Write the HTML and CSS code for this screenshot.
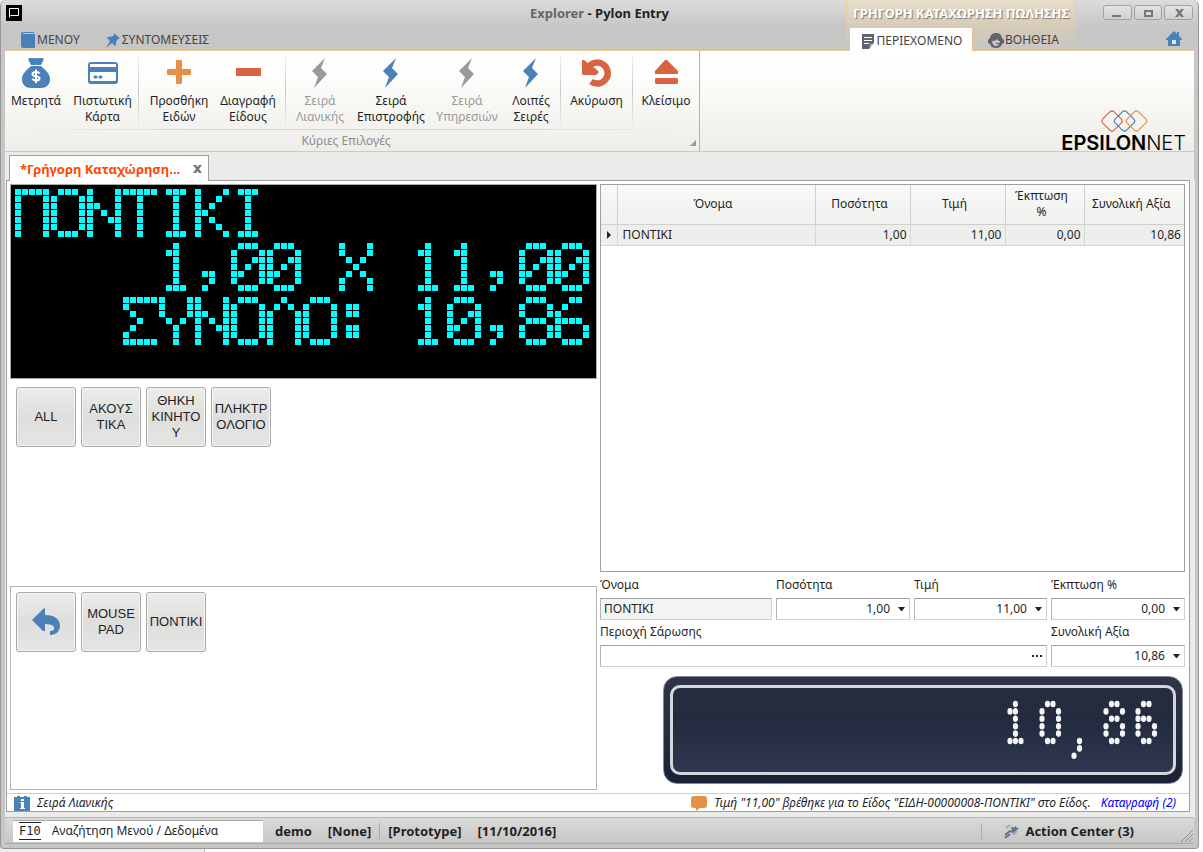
FILE: index.html
```html
<!DOCTYPE html>
<html lang="el">
<head>
<meta charset="utf-8">
<meta name="viewport" content="width=device-width, initial-scale=1">
<title>Explorer - Pylon Entry</title>
<link rel="stylesheet" href="styles.css">
<script src="displays.js" defer></script>
</head>
<body>
<svg class="sprite" aria-hidden="true">
  <symbol id="bolt" viewBox="0 0 18 30"><path d="M14 0 1 13l6 6-4 11 13-14-6-6z"/></symbol>
  <symbol id="caret" viewBox="0 0 7 4"><path d="M0 0h7L4 4H3z"/></symbol>
</svg>
<div class="window">
  <header class="titlebar">
    <svg class="app-icon" viewBox="0 0 16 16"><path d="M0 0h16v16H0z"/><path d="M3.500 12.500v-9h9v7h-8" fill="none" stroke="#fff"/></svg>
    <h1 class="title"><span class="title-app">Explorer</span> - Pylon Entry</h1>
    <div class="context-title">ΓΡΗΓΟΡΗ ΚΑΤΑΧΩΡΗΣΗ ΠΩΛΗΣΗΣ</div>
    <div class="window-buttons">
      <button aria-label="Minimize"><svg viewBox="0 0 12 10"><path d="M1 7h9v2H1z"/></svg></button>
      <button aria-label="Maximize"><svg viewBox="0 0 12 10"><path d="M2 2h9v7H2zM4 4v3h5V4z" fill-rule="evenodd"/></svg></button>
      <button aria-label="Close"><svg viewBox="0 0 12 10"><path d="M2 1h3l1.500 2L8 1h3L8 5l3 4H8L6.500 7 5 9H2l3-4z"/></svg></button>
    </div>
  </header>

  <nav class="tabs">
    <button class="tab tab-menu"><svg viewBox="0 0 16 16"><path fill="#4a81b9" d="M3 0h11v1H3v1h12v13a1 1 0 0 1-1 1H3a2 2 0 0 1-2-2V2a2 2 0 0 1 2-2z"/></svg>ΜΕΝΟΥ</button>
    <button class="tab tab-shortcuts"><svg viewBox="0 0 16 16"><path fill="#4a81b9" d="m9 1 6 5.500-2 .5-2 3v3l-1 1-3-3-6 5 4-7-3-3 1-1 4-.5L9 3z"/></svg>ΣΥΝΤΟΜΕΥΣΕΙΣ</button>
    <div class="context-tabs">
      <button class="tab tab-active"><svg viewBox="0 0 16 16"><path fill="#5e656e" d="M2 1h12v9l-5 6H2z"/><path stroke="#fff" fill="none" d="M4 4.500h8M4 7.500h8M4 10.500h5"/><path fill="#fff" d="m9.500 15 .5-4 4-.5z" opacity=".5"/></svg>ΠΕΡΙΕΧΟΜΕΝΟ</button>
      <button class="tab tab-help"><svg viewBox="0 0 16 16"><path fill="#5e656e" d="M8 1a6 6 0 0 1 6 5l2 2v3l-2 1c-1 3-3 4-6 4s-5-1-6-4l-2-1V8l2-2a6 6 0 0 1 6-5z"/><path d="M4 9c3 0 4-1 5-2 1 1 1 2 3 2 0 3-2 5-4 5s-4-2-4-5z" fill="#c8c2ba"/><path d="M8 11.500h5" stroke="#5e656e"/></svg>ΒΟΗΘΕΙΑ</button>
    </div>
    <button class="home" aria-label="Home"><svg viewBox="0 0 16 16"><path fill="#4a81b9" d="M8 0l3 3V1h2v4l3 3v1h-2v6H2V9H0V8z"/><path fill="#e3e5e8" d="M6 9h4v4H6z"/></svg></button>
  </nav>

  <section class="ribbon">
    <div class="ribbon-group">
      <div class="ribbon-items">
        <div class="set set-pay">
          <button class="cmd"><svg viewBox="0 0 30 30"><path fill="#4a81b9" d="M7 1c3-2 5 0 8-1 3 1 5-1 8 1l-3 6H10zM10 8h10c3 3 9 7 9 13 0 6-4 9-9 9H10c-5 0-9-3-9-9C1 15 7 11 10 8z"/><path fill="none" stroke="#fff" stroke-width="2" d="M18.500 15.500c-1-2-7-2-7 .7 0 3 7 1.300 7 4.300 0 2.700-6 2.500-7 .2M15 11.500v13.500"/></svg><span>Μετρητά</span></button>
          <button class="cmd"><svg viewBox="0 0 30 30"><path fill="#4a81b9" fill-rule="evenodd" d="M3 4h24a3 3 0 0 1 3 3v16a3 3 0 0 1-3 3H3a3 3 0 0 1-3-3V7a3 3 0 0 1 3-3zm0 2a1 1 0 0 0-1 1v2h26V7a1 1 0 0 0-1-1zM2 14v8a1 1 0 0 0 1 1h24a1 1 0 0 0 1-1v-8z"/><path stroke="#4a81b9" stroke-width="3" stroke-linecap="round" d="M7 19h1M12 19h1"/></svg><span>Πιστωτική<br>Κάρτα</span></button>
        </div>
        <div class="set set-lines">
          <button class="cmd"><svg viewBox="0 0 30 30"><path fill="#e69148" d="M13 2h4a1 1 0 0 1 1 1v8h8a1 1 0 0 1 1 1v4a1 1 0 0 1-1 1h-8v8a1 1 0 0 1-1 1h-4a1 1 0 0 1-1-1v-8H4a1 1 0 0 1-1-1v-4a1 1 0 0 1 1-1h8V3a1 1 0 0 1 1-1z"/></svg><span>Προσθήκη<br>Ειδών</span></button>
          <button class="cmd"><svg viewBox="0 0 30 30"><rect fill="#d96243" x="3" y="10" width="25" height="8" rx="1"/></svg><span>Διαγραφή<br>Είδους</span></button>
        </div>
        <div class="set set-series">
          <button class="cmd" disabled><svg class="bolt-gray"><use href="#bolt"/></svg><span>Σειρά<br>Λιανικής</span></button>
          <button class="cmd"><svg class="bolt-blue"><use href="#bolt"/></svg><span>Σειρά<br>Επιστροφής</span></button>
          <button class="cmd" disabled><svg class="bolt-gray"><use href="#bolt"/></svg><span>Σειρά<br>Υπηρεσιών</span></button>
          <button class="cmd"><svg class="bolt-blue"><use href="#bolt"/></svg><span>Λοιπές<br>Σειρές</span></button>
        </div>
        <div class="set set-undo">
          <button class="cmd"><svg viewBox="0 0 30 30"><path fill="none" stroke="#d96243" stroke-width="6.500" d="M7 8.500A10.500 10.500 0 1 1 9 23.500"/><path fill="#d96243" d="M0 2h2l5 4 7 5 3 3-3 3H1l-1-1z"/></svg><span>Ακύρωση</span></button>
        </div>
        <div class="set set-close">
          <button class="cmd"><svg viewBox="0 0 30 30"><path fill="#d96243" d="M14 2h2l11 11v3H4v-3zM5 20h21l1 1v4l-1 1H5l-1-1v-4z"/></svg><span>Κλείσιμο</span></button>
        </div>
      </div>
      <div class="ribbon-caption">Κύριες Επιλογές<svg viewBox="0 0 6 6"><path d="M6 0v6H0z"/></svg></div>
    </div>
    <div class="brand">
      <svg viewBox="0 0 48 24" fill="none" stroke-width="1.200">
        <rect x="4" y="4" width="16" height="16" rx="3" transform="rotate(45 12 12)" stroke="#d96243"/>
        <rect x="16.500" y="4" width="16" height="16" rx="3" transform="rotate(45 24.500 12)" stroke="#4a81b9"/>
        <rect x="28.500" y="4" width="16" height="16" rx="3" transform="rotate(45 36.500 12)" stroke="#e69148"/>
      </svg>
      <div class="brand-name">EPSILON<span>NET</span></div>
    </div>
  </section>

  <div class="doc-strip">
    <div class="doc-tab"><span>*Γρήγορη Καταχώρηση...</span><button aria-label="Close tab"><svg viewBox="0 0 9 8"><path d="M0 0h3l1.500 2L6 0h3L6 4l3 4H6L4.500 6 3 8H0l3-4z"/></svg></button></div>
  </div>

  <main class="doc">
    <div class="work">
      <section class="left">
        <div class="vfd">
          <p class="vfd-line lamps" data-face="square">ΠΟΝΤΙΚΙ</p>
          <p class="vfd-line vfd-right lamps" data-face="square">1,00 X 11,00</p>
          <p class="vfd-line vfd-right lamps" data-face="square">ΣΥΝΟΛΟ: 10,86</p>
        </div>
        <div class="tiles tiles-groups">
          <button class="tile">ALL</button>
          <button class="tile">ΑΚΟΥΣ<br>ΤΙΚΑ</button>
          <button class="tile">ΘΗΚΗ<br>ΚΙΝΗΤΟ<br>Υ</button>
          <button class="tile">ΠΛΗΚΤΡ<br>ΟΛΟΓΙΟ</button>
        </div>
        <div class="tiles tiles-items">
          <button class="tile" aria-label="Back"><svg viewBox="0 0 28 28"><path fill="#4a81b9" d="M0 12 11 1l2-1v7c8 0 15 3 15 11 0 5-4 9-10 9v-4c3 0 5-1 4-4-1-2-4-3-9-3v7h-2z"/></svg></button>
          <button class="tile">MOUSE<br>PAD</button>
          <button class="tile">ΠΟΝΤΙΚΙ</button>
        </div>
      </section>

      <section class="right">
        <div class="grid-box">
          <table class="grid">
            <colgroup><col class="c-mark"><col class="c-name"><col class="c-num"><col class="c-num"><col class="c-disc"><col class="c-total"></colgroup>
            <thead><tr><th></th><th>Όνομα</th><th>Ποσότητα</th><th>Τιμή</th><th>Έκπτωση<br>%</th><th>Συνολική Αξία</th></tr></thead>
            <tbody><tr><td><svg class="marker" viewBox="0 0 4 8"><path d="M0 0l4 4-4 4z"/></svg></td><td>ΠΟΝΤΙΚΙ</td><td>1,00</td><td>11,00</td><td>0,00</td><td>10,86</td></tr></tbody>
          </table>
        </div>
        <form class="fields">
          <div class="field"><label for="name">Όνομα</label><div class="box box-readonly"><input id="name" value="ΠΟΝΤΙΚΙ" readonly></div></div>
          <div class="field"><label for="qty">Ποσότητα</label><div class="box"><input id="qty" class="num" value="1,00"><button type="button" aria-label="Ποσότητα"><svg><use href="#caret"/></svg></button></div></div>
          <div class="field"><label for="price">Τιμή</label><div class="box"><input id="price" class="num" value="11,00"><button type="button" aria-label="Τιμή"><svg><use href="#caret"/></svg></button></div></div>
          <div class="field"><label for="disc">Έκπτωση %</label><div class="box"><input id="disc" class="num" value="0,00"><button type="button" aria-label="Έκπτωση"><svg><use href="#caret"/></svg></button></div></div>
          <div class="field field-scan"><label for="scan">Περιοχή Σάρωσης</label><div class="box"><input id="scan"><button type="button" class="more" aria-label="Σάρωση"><svg viewBox="0 0 10 2"><path d="M0 0h2v2H0zM4 0h2v2H4zM8 0h2v2H8z"/></svg></button></div></div>
          <div class="field"><label for="total">Συνολική Αξία</label><div class="box"><input id="total" class="num" value="10,86"><button type="button" aria-label="Συνολική Αξία"><svg><use href="#caret"/></svg></button></div></div>
        </form>
        <div class="led"><output class="led-screen lamps" data-face="round">10,86</output></div>
      </section>
    </div>
    <footer class="doc-status">
      <svg viewBox="0 0 16 16"><path fill="#4a81b9" d="M0 2h3V1h3v1h4V1h3v1h3v14H0z"/><path fill="#fff" d="M7 4h3v2H7zM6 7h4v6h1v1H6v-1h1V8H6z"/></svg>
      <em>Σειρά Λιανικής</em>
      <span class="message"><svg viewBox="0 0 16 16"><path fill="#e69148" d="M3 1h10a3 3 0 0 1 3 3v6a3 3 0 0 1-3 3H9l-4 3v-3H3a3 3 0 0 1-3-3V4a3 3 0 0 1 3-3z"/></svg><em>Τιμή "11,00" βρέθηκε για το Είδος "ΕΙΔΗ-00000008-ΠΟΝΤΙΚΙ" στο Είδος.</em></span>
      <a href="#log">Καταγραφή (2)</a>
    </footer>
  </main>

  <footer class="statusbar">
    <label class="search"><kbd>F10</kbd><input aria-label="Αναζήτηση" value="Αναζήτηση Μενού / Δεδομένα"></label>
    <span class="info">demo</span>
    <span class="info info-ruled">[None]</span>
    <span class="info">[Prototype]</span>
    <span class="info">[11/10/2016]</span>
    <button class="action-center"><svg viewBox="0 0 16 16"><g fill="none" stroke="#5b7390" stroke-width="2"><path d="m1 12 5-4 3 1 5-4"/><path d="m1 15 5-4 M8 4l1 3 3-3"/></g><path d="m2 5 4-3M9 12l4-4" stroke="#a3a9b0" stroke-width="2"/></svg>Action Center (3)</button>
    <svg class="grip" viewBox="0 0 12 12"><path d="M0 12 12 0M4 12l8-8M8 12l4-4" stroke="#8f8f8f"/></svg>
  </footer>
</div>
</body>
</html>
```

FILE: styles.css
```css
* { box-sizing: border-box; }
body {
  margin: 0;
  height: 100vh;
  display: flex;
  padding: 0 4px 3px 0;
  background: linear-gradient(90deg, #efefef 204px, #bbb 204px, #bbb 205px, #fdfdfd 205px);
  font: 12px/16px "Noto Sans", "DejaVu Sans", sans-serif;
  color: #1f1f1f;
}
button { font: inherit; color: inherit; border: 0; padding: 0; background: none; }
input { font: inherit; color: inherit; border: 0; padding: 0; background: none; min-width: 0; }
svg { display: block; flex: none; }
.sprite { position: absolute; width: 0; height: 0; }

.window {
  flex: 1;
  min-width: 0;
  display: flex;
  flex-direction: column;
  padding: 0 4px 4px;
  border: 1px solid #969696;
  border-top: 0;
  border-radius: 6px 6px 4px 4px;
  background: linear-gradient(#dcdcda, #c6c6c5 27px);
}

/* title bar */
.titlebar { display: flex; height: 27px; position: relative; }
.app-icon { width: 16px; height: 16px; margin: 5px 0 0 1px; }
.title { position: absolute; inset: 5px 0 auto; margin: 0; text-align: center; font-size: 13px; line-height: 16px; }
.title-app { color: #666; }
.context-title {
  width: 230px;
  margin-left: auto;
  padding-top: 5px;
  text-align: center;
  white-space: nowrap;
  font-size: 13px;
  font-weight: bold;
  color: #fff;
  text-shadow: 1px 1px 1px #777;
  border: 1px solid #e9cba0;
  border-width: 0 1px;
  background: linear-gradient(#e8dccb, #d6cab9);
}
.window-buttons { display: flex; gap: 2px; width: 118px; padding: 5px 1px 0 27px; }
.window-buttons button {
  flex: 1;
  height: 15px;
  display: flex;
  justify-content: center;
  align-items: center;
  border: 1px solid #a2a2a2;
  border-radius: 3px;
  background: linear-gradient(#e4e4e4, #cfcfcf);
}
.window-buttons svg { width: 12px; height: 10px; fill: #777; }

/* tab row */
.tabs { display: flex; height: 23px; color: #444; }
.tab { display: flex; align-items: center; gap: 1px; padding-top: 2px; white-space: nowrap; }
.tab svg { width: 16px; height: 16px; }
.tab-menu { margin-left: 15px; }
.tab-shortcuts { margin-left: 25px; }
.context-tabs { display: flex; width: 230px; margin-left: auto; padding-left: 4px; background: linear-gradient(#d6cab9, #c8c6c3); }
.tab-active { width: 123px; justify-content: center; margin-bottom: -1px; background: #fff; border: 1px solid #ecc58c; border-width: 1px 1px 0 0; position: relative; }
.tab-help { margin-left: 15px; }
.home { width: 118px; padding-left: 90px; }
.home svg { width: 16px; height: 16px; }

/* ribbon */
.ribbon {
  display: flex;
  justify-content: space-between;
  height: 102px;
  border: 1px solid #ecc58c;
  border-width: 1px 0;
  background: linear-gradient(#fff, #fcfcfa 30%, #eeede9);
}
.ribbon-group { display: flex; flex-direction: column; border-right: 1px solid #b3b3b0; }
.ribbon-items { display: flex; flex: 1; }
.set { display: grid; align-items: start; border-right: 1px solid; border-image: linear-gradient(#fff0, #c4c4c2 50%, #fff0) 1; }
.set-pay { grid-template-columns: 62px 71px; }
.set-lines { grid-template-columns: 70px 68px; padding: 0 3px 0 5px; }
.set-series { grid-template-columns: 60px 82px 70px 58px; padding-left: 4px; }
.set-undo { grid-template-columns: 71px; }
.set-close { grid-template-columns: 66px; border: 0; }
.cmd { display: flex; flex-direction: column; align-items: center; gap: 5px; padding-top: 7px; white-space: nowrap; }
.cmd svg { width: 30px; height: 30px; }
.cmd .bolt-gray { width: 18px; fill: #999; }
.cmd .bolt-blue { width: 18px; fill: #4a81b9; }
.cmd:disabled { color: #9a9a9a; }
.ribbon-caption {
  display: flex;
  justify-content: center;
  height: 22px;
  padding: 3px 12px 0 0;
  color: #8d8d8d;
  position: relative;
  border-top: 1px solid;
  border-image: linear-gradient(90deg, #fff0, #d4d4d2 30%, #d4d4d2 70%, #fff0) 1;
}
.ribbon-caption svg { position: absolute; right: 3px; bottom: 5px; width: 6px; height: 6px; fill: #999; }
.brand { align-self: flex-end; margin-right: 8px; }
.brand svg { width: 48px; height: 24px; margin: 0 auto 2px; }
.brand-name { font: 600 20px/16px Inter, sans-serif; color: #000; }
.brand-name span { font-weight: 300; }

/* document tabs */
.doc-strip { display: flex; height: 28px; padding: 3px 0 0 4px; background: #ebebe9; }
.doc-tab {
  width: 200px;
  height: 26px;
  display: flex;
  align-items: center;
  justify-content: space-between;
  padding: 0 6px 0 10px;
  border: 1px solid #9f9f9f;
  border-bottom: 0;
  background: #fff;
  color: #ff4800;
  font-size: 13px;
  font-weight: bold;
  white-space: nowrap;
  position: relative;
  z-index: 1;
}
.doc-tab svg { width: 9px; height: 8px; fill: #777; }

.doc {
  flex: 1;
  min-height: 0;
  display: flex;
  flex-direction: column;
  border: 1px solid #9f9f9f;
  box-shadow: 0 0 0 6px #ebebe9;
  clip-path: inset(0 -5px -6px -1px);
  margin: 0 4px 5px 1px;
  background: #fff;
}
.work { flex: 1; min-height: 0; display: flex; gap: 3px; padding: 3px 4px 0 3px; }
.left { flex: 587; min-width: 0; display: flex; flex-direction: column; }
.right { flex: 585; min-width: 0; display: flex; flex-direction: column; }

/* customer display */
.vfd { display: flex; flex-direction: column; gap: 5px; min-height: 195px; padding: 4px 5px 0 4px; background: #000; border: 1px solid #aaa; }
.vfd-line { margin: 0; display: flex; white-space: pre; }
.vfd-right { justify-content: flex-end; }
.lamp-char { display: grid; justify-items: center; color: transparent; }
.lamp-char > * { grid-area: 1 / 1; }
.vfd .lamp-char { width: 36px; height: 49px; font: 36px/49px "Liberation Mono", monospace; }
.vfd svg { width: 36px; height: 49px; fill: #0ff; }

/* product tiles */
.tiles { display: flex; flex-wrap: wrap; align-content: flex-start; gap: 5px; padding: 5px; }
.tiles-groups { flex: 1; padding: 8px 6px; }
.tiles-items { height: 204px; margin-bottom: 3px; border: 1px solid #b5b5b5; }
.tile {
  width: 60px;
  height: 60px;
  display: flex;
  justify-content: center;
  align-items: center;
  font: 13px/16px "Liberation Sans", Arial, sans-serif;
  border: 1px solid #a9a9a9;
  border-radius: 3px;
  background: linear-gradient(#ececeb, #dededd 50%, #e5e5e4);
  box-shadow: inset 0 0 0 1px #f4f4f3;
}
.tile svg { width: 28px; height: 28px; }

/* item grid */
.grid-box { flex: 1; min-height: 0; border: 1px solid #9f9f9f; }
.grid { width: 100%; table-layout: fixed; border-collapse: collapse; }
.c-mark { width: 16px; }
.c-num { width: 95px; }
.c-disc { width: 79px; }
.c-total { width: 100px; }
.grid th { height: 39px; padding: 0 6px 0 0; font-weight: normal; background: linear-gradient(#f8f8f7, #f0f0ee); border: 1px solid #cfcfcd; border-width: 0 1px 1px 0; }
.grid td { height: 21px; padding: 0 3px; text-align: right; background: #eeeeed; border: 1px solid #d6d6d4; border-width: 0 1px 1px 0; }
.grid td:nth-child(2) { text-align: left; padding-left: 5px; }
.grid th:last-child, .grid td:last-child { border-right: 0; }
.marker { width: 4px; height: 8px; fill: #223; margin: 0 auto; }

/* entry fields */
.fields { display: grid; grid-template-columns: 172fr 134fr 133fr 134fr; gap: 4px; padding-top: 5px; }
.field { min-width: 0; }
.field-scan { grid-column: span 3; }
.field label { display: block; height: 21px; }
.box { display: flex; height: 22px; border: 1px solid #9f9f9f; border-color: #9f9f9f #d0d0ce #d0d0ce #b5b5b5; background: #fff; }
.box-readonly { background: #f3f3f2; }
.box input { flex: 1; padding: 0 3px; }
.box .num { text-align: right; padding-right: 4px; }
.box button { width: 15px; padding-left: 4px; }
.box svg { width: 7px; height: 4px; fill: #222; }
.box .more { padding: 0 3px 0 1px; }
.box .more svg { width: 10px; height: 2px; }

/* total display */
.led {
  width: 520px;
  max-width: 100%;
  height: 108px;
  align-self: flex-end;
  margin: 9px 2px 9px 0;
  padding: 8px 6px;
  border: 1px solid #8a8794;
  border-radius: 14px;
  background: linear-gradient(#2e3549, #272e42 50%, #1a2035);
}
.led-screen {
  display: flex;
  justify-content: flex-end;
  height: 90px;
  padding: 12px 6px 0 0;
  border: 3px solid #d6d6da;
  border-radius: 10px;
  background: radial-gradient(ellipse 900px 26px at 50% 0, #262c40 98%, #262c4000 100%), linear-gradient(#1d2336, #2f384f);
}
.led .lamp-char { width: 32px; height: 60px; font: 32px/60px "Liberation Mono", monospace; }
.led svg { width: 32px; height: 60px; fill: #f6f6f6; }

/* status lines */
.doc-status { display: flex; align-items: center; height: 18px; padding: 0 13px 0 7px; border-top: 1px solid #cfcfcd; white-space: nowrap; }
.doc-status svg { width: 16px; height: 16px; margin-right: 7px; }
.message { display: flex; margin-left: auto; }
.doc-status a { margin-left: 10px; font-style: italic; color: #00f; text-decoration: none; }
.statusbar {
  display: flex;
  align-items: center;
  height: 27px;
  padding-left: 8px;
  border-top: 1px solid #b5b5b5;
  border-bottom: 1px solid #a9a9a9;
  background: linear-gradient(#dadad9, #c6c6c5);
  font-size: 13px;
  font-weight: bold;
  white-space: nowrap;
  position: relative;
}
.search { display: flex; align-items: center; width: 250px; height: 22px; padding-left: 6px; background: #fff; border-top: 1px solid #a9a9a9; font-size: 12px; font-weight: normal; }
.search input { flex: 1; padding-left: 11px; }
.search kbd { font: 12px/16px "DejaVu Sans Mono", monospace; border: 1px solid #222; border-width: 1px 0; }
.info { margin-left: 12px; }
.info + .info { margin-left: 16px; }
.info-ruled { padding-right: 8px; border-right: 1px solid #aaa; }
.info-ruled + .info { margin-left: 8px; }
.action-center { display: flex; align-items: center; gap: 5px; margin-left: auto; margin-right: 60px; padding-left: 22px; border-left: 1px solid #aaa; }
.action-center svg { width: 16px; height: 16px; }
.grip { position: absolute; right: 1px; bottom: 1px; width: 12px; height: 12px; }
```

FILE: displays.js
```js
// Lamp patterns of the two displays, one row of lamps per number group.
const faces = {
  square: {
    'Π': '11111 10001 10001 10001 10001 10001 10001',
    'Ο': '01110 10001 10001 10001 10001 10001 01110',
    'Ν': '10001 10001 11001 10101 10011 10001 10001',
    'Τ': '11111 00100 00100 00100 00100 00100 00100',
    'Ι': '01110 00100 00100 00100 00100 00100 01110',
    'Κ': '10001 10010 10100 11000 10100 10010 10001',
    'Σ': '11111 10000 01000 00100 01000 10000 11111',
    'Υ': '10001 10001 10001 01010 00100 00100 00100',
    'Λ': '00100 01010 10001 10001 10001 10001 10001',
    'X': '10001 10001 01010 00100 01010 10001 10001',
    '0': '01110 10001 10011 10101 11001 10001 01110',
    '1': '00100 01100 00100 00100 00100 00100 01110',
    '6': '00110 01000 10000 11110 10001 10001 01110',
    '8': '01110 10001 10001 01110 10001 10001 01110',
    ',': '00000 00000 00000 00000 01100 00100 01000',
    ':': '00000 01100 01100 00000 01100 01100 00000'
  },
  round: {
    '0': '0110 1001 1001 1001 1001 0110',
    '1': '0100 1100 0100 0100 0100 1110',
    '6': '0110 1000 1110 1001 1001 0110',
    '8': '0110 1001 0110 1001 1001 0110',
    ',': '0000 0000 0000 0000 0000 0100 0100 1000'
  }
};

function lamp(face, col, row) {
  return face === 'square'
    ? `<rect x="${col * 7}" y="${row * 7}" width="6" height="6"/>`
    : `<ellipse cx="${3 + col * 5.5}" cy="${4 + row * 7.4}" rx="2.6" ry="3.3"/>`;
}

document.querySelectorAll('.lamps').forEach(line => {
  const face = line.dataset.face;
  line.innerHTML = [...line.textContent].map(ch => {
    const rows = (faces[face][ch] || '').split(' ');
    const lamps = rows.flatMap((bits, r) => [...bits].map((b, c) => b === '1' ? lamp(face, c, r) : ''));
    return `<span class="lamp-char"><span>${ch}</span><svg aria-hidden="true">${lamps.join('')}</svg></span>`;
  }).join('');
});
```
